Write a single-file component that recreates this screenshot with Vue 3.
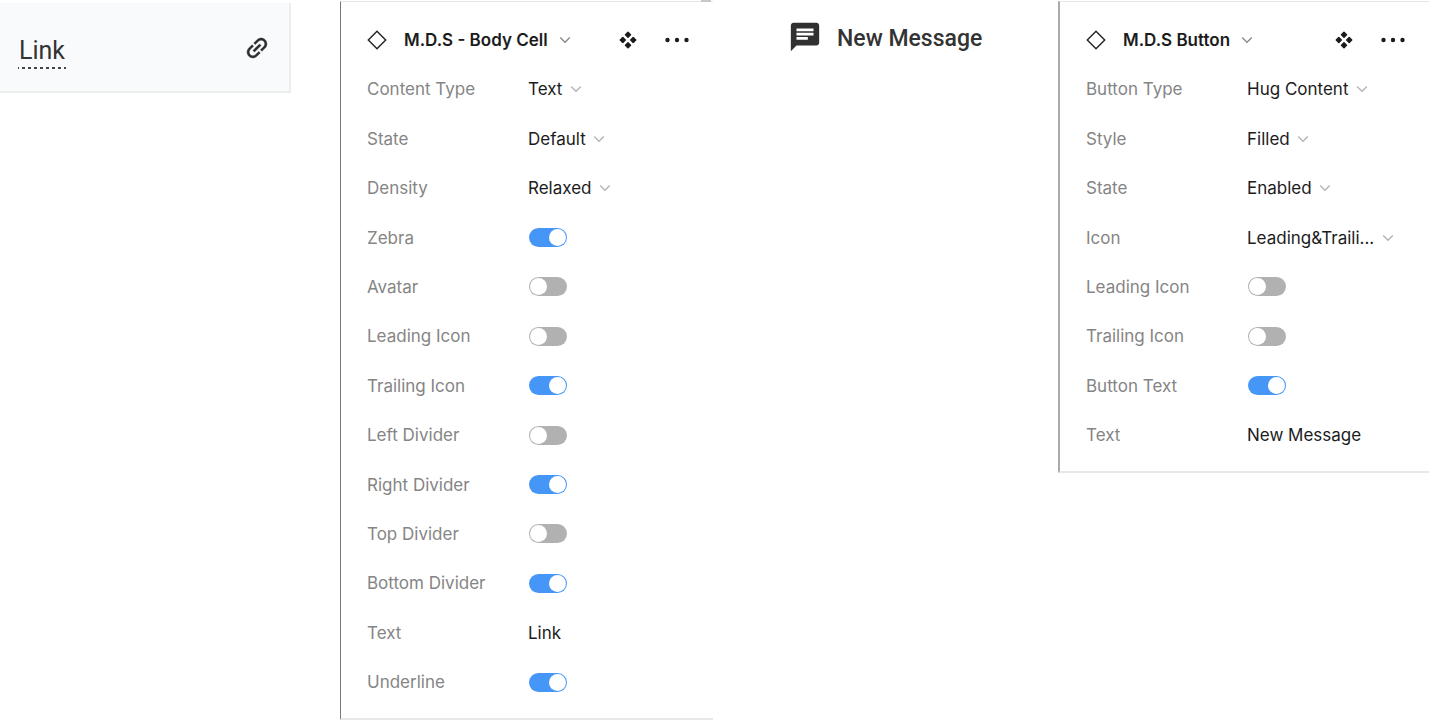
<template>
  <main class="board">
    <section class="cell-column">
      <div class="body-cell">
        <a href="#" class="cell-link">Link</a>
        <svg class="link-icon" viewBox="0 0 24 24" aria-hidden="true">
          <path
            transform="rotate(-45 12 12)"
            d="M3.9 12c0-1.71 1.39-3.1 3.1-3.1h4V7H7c-2.76 0-5 2.24-5 5s2.24 5 5 5h4v-1.9H7c-1.71 0-3.1-1.39-3.1-3.1zM8 13h8v-2H8v2zm9-6h-4v1.9h4c1.71 0 3.1 1.39 3.1 3.1s-1.39 3.1-3.1 3.1h-4V17h4c2.76 0 5-2.24 5-5s-2.24-5-5-5z"
          />
        </svg>
      </div>
    </section>

    <template v-for="panel in panels" :key="panel.id">
      <section v-if="panel.id === 'button'" class="message-column">
        <button type="button" class="message-button">
          <svg class="message-icon" viewBox="0 0 24 24" aria-hidden="true">
            <path
              d="M20 2H4c-1.1 0-1.99.9-1.99 2L2 22l4-4h14c1.1 0 2-.9 2-2V4c0-1.1-.9-2-2-2zM6 9h12v2H6V9zm8 5H6v-2h8v2zm4-6H6V6h12v2z"
            />
          </svg>
          <span>New Message</span>
        </button>
      </section>

      <section class="panel" :class="panel.id">
        <header class="panel-header">
          <svg class="diamond" viewBox="0 0 20 20" aria-hidden="true">
            <path d="M10 1.3 18.7 10 10 18.7 1.3 10z" />
          </svg>
          <button type="button" class="title">
            {{ panel.title }}
            <svg class="chevron dark" viewBox="0 0 12 8" aria-hidden="true">
              <path d="M1.2 1.5 6 6.3l4.8-4.8" />
            </svg>
          </button>
          <button type="button" class="action" aria-label="Component">
            <svg class="component" viewBox="0 0 18 18" aria-hidden="true">
              <path d="M9 1.3 11.5 3.8 9 6.3 6.5 3.8z" />
              <path d="M9 11.7 11.5 14.2 9 16.7 6.5 14.2z" />
              <path d="M3.8 6.5 6.3 9 3.8 11.5 1.3 9z" />
              <path d="M14.2 6.5 16.7 9 14.2 11.5 11.7 9z" />
            </svg>
          </button>
          <button type="button" class="action" aria-label="More">
            <svg class="dots" viewBox="0 0 24 6" aria-hidden="true">
              <circle cx="2.5" cy="3" r="2.2" />
              <circle cx="12" cy="3" r="2.2" />
              <circle cx="21.5" cy="3" r="2.2" />
            </svg>
          </button>
        </header>

        <div v-for="row in panel.rows" :key="row.label" class="row">
          <label :for="fieldId(panel, row)">{{ row.label }}</label>
          <div class="value">
            <template v-if="row.type === 'select'">
              <select :id="fieldId(panel, row)" v-model="row.value">
                <option>{{ row.value }}</option>
              </select>
              <svg class="chevron" viewBox="0 0 12 8" aria-hidden="true">
                <path d="M1.2 1.5 6 6.3l4.8-4.8" />
              </svg>
            </template>
            <input
              v-else-if="row.type === 'toggle'"
              :id="fieldId(panel, row)"
              v-model="row.value"
              type="checkbox"
              role="switch"
              class="toggle"
            />
            <input v-else :id="fieldId(panel, row)" v-model="row.value" type="text" class="text" />
          </div>
        </div>
      </section>
    </template>
  </main>
</template>

<script setup>
import { reactive } from 'vue';

const panels = reactive([
  {
    id: 'cell',
    title: 'M.D.S - Body Cell',
    rows: [
      { label: 'Content Type', type: 'select', value: 'Text' },
      { label: 'State', type: 'select', value: 'Default' },
      { label: 'Density', type: 'select', value: 'Relaxed' },
      { label: 'Zebra', type: 'toggle', value: true },
      { label: 'Avatar', type: 'toggle', value: false },
      { label: 'Leading Icon', type: 'toggle', value: false },
      { label: 'Trailing Icon', type: 'toggle', value: true },
      { label: 'Left Divider', type: 'toggle', value: false },
      { label: 'Right Divider', type: 'toggle', value: true },
      { label: 'Top Divider', type: 'toggle', value: false },
      { label: 'Bottom Divider', type: 'toggle', value: true },
      { label: 'Text', type: 'text', value: 'Link' },
      { label: 'Underline', type: 'toggle', value: true }
    ]
  },
  {
    id: 'button',
    title: 'M.D.S Button',
    rows: [
      { label: 'Button Type', type: 'select', value: 'Hug Content' },
      { label: 'Style', type: 'select', value: 'Filled' },
      { label: 'State', type: 'select', value: 'Enabled' },
      { label: 'Icon', type: 'select', value: 'Leading&Traili...' },
      { label: 'Leading Icon', type: 'toggle', value: false },
      { label: 'Trailing Icon', type: 'toggle', value: false },
      { label: 'Button Text', type: 'toggle', value: true },
      { label: 'Text', type: 'text', value: 'New Message' }
    ]
  }
]);

const fieldId = (panel, row) => `${panel.id}-${row.label.toLowerCase().replace(/ /g, '-')}`;
</script>

<style>
body {
  margin: 0;
  background: #fff;
}
</style>

<style scoped>
.board {
  display: grid;
  grid-template-columns: 340fr 373fr 345fr 371fr;
  align-items: start;
  font-family: Inter, "Liberation Sans", sans-serif;
  font-size: 17px;
  line-height: 24px;
  color: #1c1c1c;
}

button,
select,
input {
  margin: 0;
  padding: 0;
  border: 0;
  background: none;
  font: inherit;
  color: inherit;
}

.body-cell {
  display: flex;
  align-items: center;
  justify-content: space-between;
  margin: 3px 49px 0 0;
  padding: 31px 18px 21px;
  background: #f9fafc;
  border-right: 2px solid #eceeee;
  border-bottom: 2px solid #eceeee;
}

.cell-link {
  padding: 0 1px 2px;
  font-family: Roboto, "Liberation Sans", sans-serif;
  font-size: 25px;
  line-height: 32px;
  color: #333;
  text-decoration: none;
  background: repeating-linear-gradient(90deg, #444 0 1px, transparent 1px 4px, #444 4px 6px) 0 bottom / 100% 2px no-repeat;
}

.link-icon {
  width: 28px;
  height: 28px;
  margin-bottom: 8px;
  fill: #2c2c2c;
  stroke: #2c2c2c;
  stroke-width: 0.3;
}

.message-button {
  display: flex;
  align-items: center;
  gap: 15px;
  margin: 19px 0 0 75px;
  font-family: Roboto, "Liberation Sans", sans-serif;
  font-size: 23px;
  font-weight: 500;
  line-height: 32px;
  color: #333;
  white-space: nowrap;
}

.message-button span {
  padding-top: 4px;
}

.message-icon {
  width: 34px;
  height: 34px;
  fill: #303030;
}

.panel {
  position: relative;
  display: grid;
  /* uneven tracks keep an average pitch of 49.4px */
  grid-auto-rows: 49px 50px 49px 50px 49px;
  margin-top: 1px;
  padding: 13px 24px 11px 26px;
  border: solid #e8e8e8;
  border-width: 1px 0 2px 1px;
}

.panel.cell {
  border-left-color: #777;
}

.panel.cell::after {
  content: "";
  position: absolute;
  top: -2px;
  right: 2px;
  width: 10px;
  height: 2px;
  background: #c8c8c8;
}

.panel.button {
  border-left: 2px solid #aaa;
}

.panel-header {
  display: flex;
  align-items: center;
}

.diamond {
  width: 20px;
  height: 20px;
  margin-right: 17px;
  fill: none;
  stroke: #222;
  stroke-width: 1.4;
}

.title {
  display: flex;
  align-items: center;
  margin-right: auto;
  font-weight: 600;
  white-space: nowrap;
}

.chevron {
  flex: none;
  width: 12px;
  height: 8px;
  margin-left: 7px;
  fill: none;
  stroke: #b3b3b3;
  stroke-width: 1.3;
}

.chevron.dark {
  margin-left: 11px;
  stroke: #888;
}

.action {
  display: flex;
  margin-left: 28px;
}

.component {
  width: 18px;
  height: 18px;
  fill: #1c1c1c;
  stroke: #1c1c1c;
  stroke-width: 1.5;
  stroke-linejoin: round;
}

.dots {
  width: 24px;
  height: 6px;
  fill: #1c1c1c;
}

.row {
  display: grid;
  grid-template-columns: 161px minmax(0, 1fr);
  align-items: center;
}

.row label {
  color: #858585;
  white-space: nowrap;
}

.value {
  display: flex;
  align-items: center;
}

select {
  appearance: none;
}

.text {
  width: 100%;
}

.toggle {
  appearance: none;
  display: flex;
  width: 38px;
  height: 19px;
  margin-left: 1px;
  padding: 1px;
  box-sizing: border-box;
  border-radius: 10px;
  background: #b1b1b1;
}

.toggle::before {
  content: "";
  width: 17px;
  height: 17px;
  border-radius: 50%;
  background: #fff;
}

.toggle:checked {
  justify-content: flex-end;
  background: #4696f8;
}
</style>
